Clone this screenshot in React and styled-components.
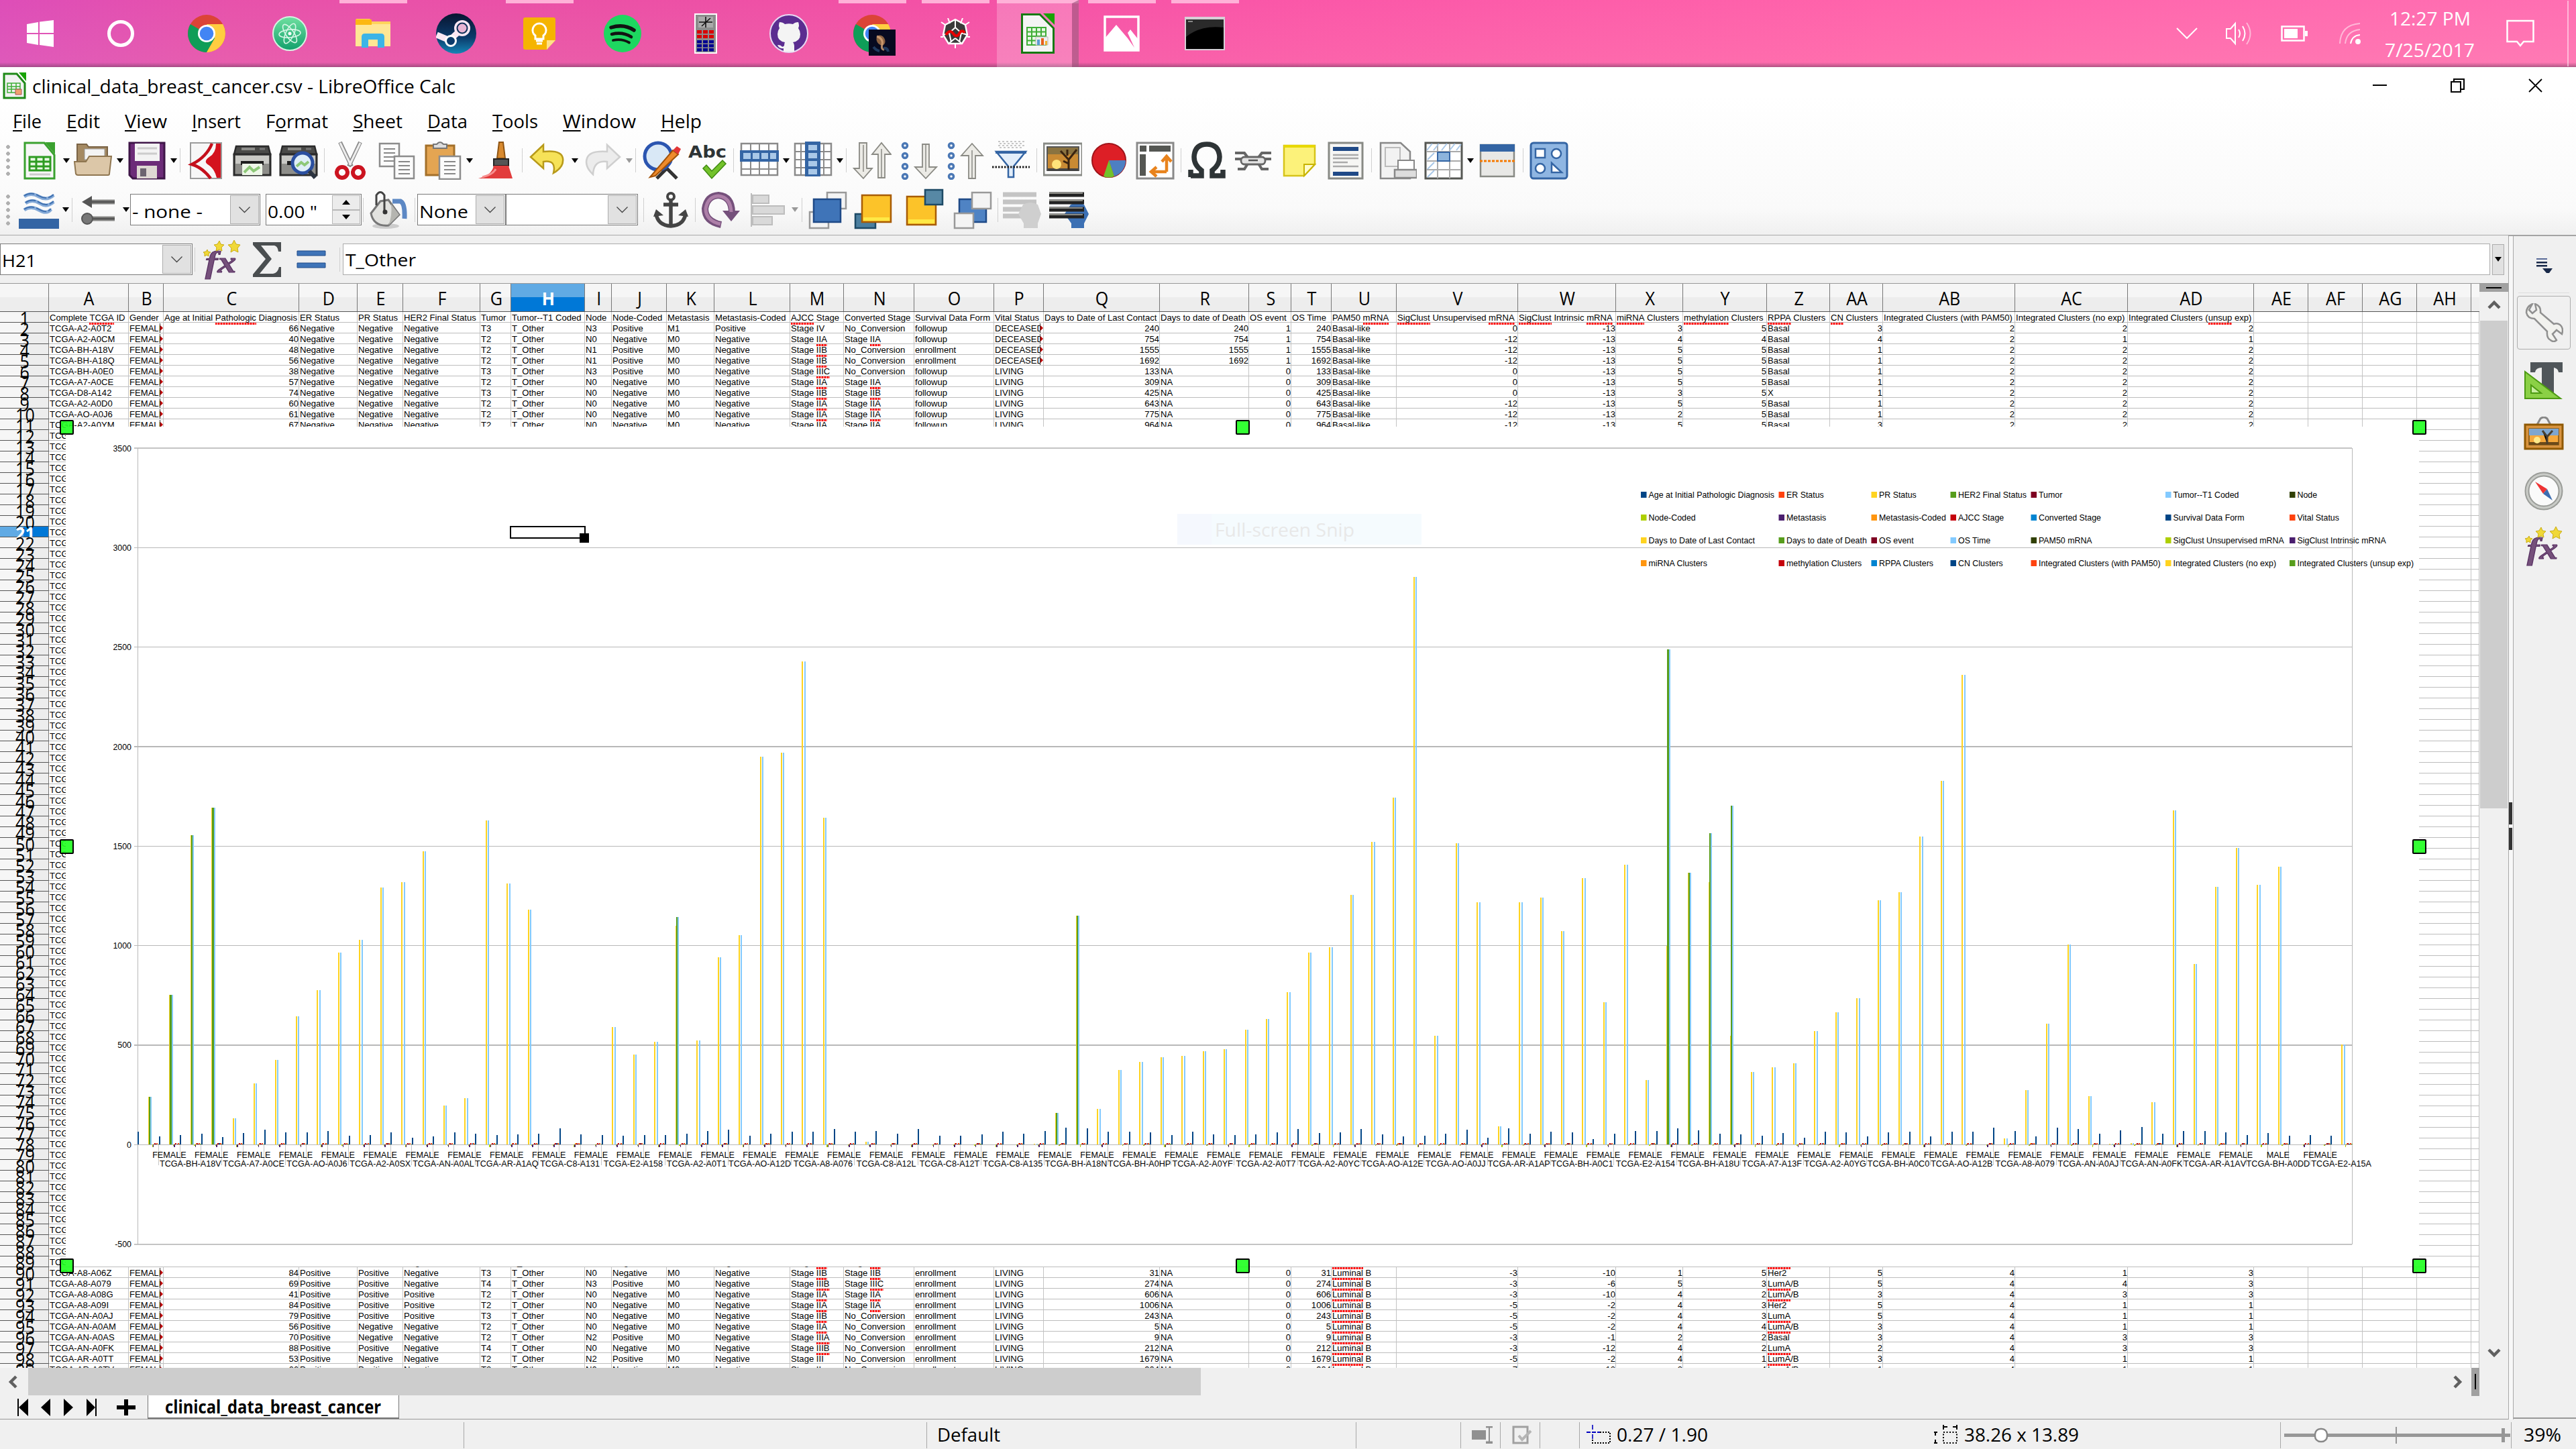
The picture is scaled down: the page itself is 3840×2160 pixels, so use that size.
import React, { useLayoutEffect, useRef, useState } from 'react';
import styled, { createGlobalStyle, css } from 'styled-components';

const UI = '"Open Sans", "Noto Sans", sans-serif';
const SHEET = '"Liberation Sans", Arial, sans-serif';

const Global = createGlobalStyle`
  html, body { margin: 0; padding: 0; background: #f0f0f0; }
  body { width: 3840px; height: 2160px; overflow: hidden; font-family: ${UI}; font-size: 27px; color: #000; }
  *, *::before, *::after { box-sizing: border-box; }
  svg { display: block; flex: none; }
`;

/* ---------- text that is condensed to a known width ---------- */
const FitBox = styled.span`
  display: inline-block; flex: none; width: ${p => p.$w}px; white-space: nowrap;
`;
const FitInner = styled.span`
  display: inline-block; transform-origin: 0 50%; white-space: pre;
`;
function Fit({ w, children }) {
  const ref = useRef(null);
  const [k, setK] = useState(1);
  useLayoutEffect(() => { setK(w / ref.current.getBoundingClientRect().width * k); }, [w]);
  return <FitBox $w={w}><FitInner ref={ref} style={{ transform: `scaleX(${k})` }}>{children}</FitInner></FitBox>;
}

/* ---------- taskbar ---------- */
const Screen = styled.div`
  width: 3840px; height: 2160px; display: flex; flex-direction: column; overflow: hidden; background: #f0f0f0;
`;
const Taskbar = styled.div`
  height: 100px; flex: none; display: flex; align-items: stretch; justify-content: space-between;
  background:
    linear-gradient(180deg, rgba(90,60,90,0) 93px, rgba(110,60,95,.55) 100px),
    linear-gradient(180deg, rgba(255,60,150,.12), rgba(255,150,170,.14)),
    linear-gradient(90deg, #d950bd 0, #e455ae 340px, #e853a8 900px, #f254a8 1400px, #fb5cab 2000px, #ff69ae 2800px, #ff76b6 3840px);
`;
const Apps = styled.div`display: flex; padding-left: 0;`;
const AppSlot = styled.div`
  width: ${p => p.$w || 124}px; height: 100px; display: flex; align-items: center; justify-content: center;
  border-top: 5px solid transparent; padding-bottom: 5px; padding-left: ${p => p.$pl || 0}px;
  background: ${p => (p.$open
    ? 'linear-gradient(#ffb1d8,#ffb1d8) 50% 0 / 101px 5px no-repeat border-box'
    : 'none')};
  ${p => p.$active && css`
    background: linear-gradient(#ffb1d8,#ffb1d8) 0 0 / 100% 5px no-repeat border-box, rgba(255,255,255,.22) border-box;
    border-right: 10px solid rgba(120,50,90,.45); width: 122px; margin-right: 2px; padding-left: 10px;
  `}
`;
const Tray = styled.div`display: flex; align-items: center; color: #fff;`;
const TrayIcon = styled.div`width: ${p => p.$w}px; display: flex; justify-content: center; padding-right: ${p => p.$pr || 0}px;`;
const Clock = styled.div`
  width: 150px; height: 100px; display: flex; flex-direction: column; align-items: center; font-size: 27px;
  line-height: 47px; padding-top: 4px; padding-right: 4px;
`;
const ShowDesktop = styled.div`width: 13px; height: 98px; border-left: 2px solid rgba(255,255,255,.5);`;

const Chrome = ({ badge }) => (
  <svg width={badge ? 64 : 58} height={badge ? 66 : 60} viewBox={badge ? '0 -3 64 66' : '0 0 58 60'}>
    <circle cx="29" cy="30" r="28" fill="#db4437" />
    <path d="M29 30 L4.8 16 A28 28 0 0 0 29 58 L42 36Z" fill="#0f9d58" />
    <path d="M29 16 H53.2 A28 28 0 0 1 29 58 L41 37Z" fill="#ffcd40" />
    <circle cx="29" cy="30" r="13" fill="#fff" /><circle cx="29" cy="30" r="10.3" fill="#4285f4" />
    {badge && (
      <g>
        <rect x="24" y="24" width="40" height="39" fill="#070a20" />
        <ellipse cx="42" cy="40" rx="8" ry="6" fill="#b9804e" opacity=".75" transform="rotate(60 42 40)" />
        <path d="M36 34q10 4 8 12t3 8" stroke="#d8a678" strokeWidth="3" fill="none" opacity=".8" />
        <path d="M46 52q6-1 7 5M31 50q4 5 9 6" stroke="#2a4f7a" strokeWidth="4" fill="none" opacity=".7" />
      </g>
    )}
  </svg>
);
const taskIcons = [
  [120, 0, <svg width="40" height="40" viewBox="0 0 40 40" fill="#fff"><path d="M0 6 17 3v16H0zM19 2.6 40 0v19H19zM0 21h17v16L0 34zM19 21h21v19l-21-3z" /></svg>],
  [120, 0, <svg width="42" height="42" viewBox="0 0 42 42"><circle cx="21" cy="21" r="17.5" fill="none" stroke="#fff" strokeWidth="5" /></svg>],
  [130, 0, <Chrome />, 6],
  [124, 0, <svg width="52" height="54" viewBox="0 0 52 54"><defs><linearGradient id="atm" x2="0" y2="1"><stop stopColor="#6fe0a0" /><stop offset="1" stopColor="#12a06c" /></linearGradient></defs><circle cx="26" cy="27" r="25" fill="url(#atm)" stroke="#d5f3e2" strokeWidth="2" /><g fill="none" stroke="#d9f7e8" strokeWidth="1.6"><ellipse cx="26" cy="27" rx="6" ry="16" transform="rotate(25 26 27)" /><ellipse cx="26" cy="27" rx="6" ry="16" transform="rotate(85 26 27)" /><ellipse cx="26" cy="27" rx="6" ry="16" transform="rotate(145 26 27)" /></g><circle cx="26" cy="27" r="2.5" fill="#fff" /></svg>],
  [124, 1, <svg width="54" height="46" viewBox="0 0 54 46"><path d="M1 3q0-2 2-2h18q3 0 4 4h28v37H1z" fill="#ffd35c" /><path d="M1 9h52v33H1z" fill="#ffe694" /><path d="M1 2h24v8H1z" fill="#fcb813" /><path d="M10 44V28q0-5 5-5h24q5 0 5 5v16H34V32H20v12z" fill="#3cb4e7" /></svg>],
  [124, 0, <svg width="60" height="60" viewBox="0 0 60 60"><defs><linearGradient id="stm" x2="0" y2="1"><stop stopColor="#08142f" /><stop offset=".6" stopColor="#0c3b6b" /><stop offset="1" stopColor="#1585b5" /></linearGradient></defs><circle cx="30" cy="30" r="30" fill="url(#stm)" /><path d="M1 32 20 40 33 28" stroke="#fbe7f3" strokeWidth="9" fill="none" strokeLinejoin="round" /><circle cx="22" cy="41" r="7.5" fill="#0c3b6b" stroke="#fff" strokeWidth="3" /><circle cx="39" cy="22" r="12" fill="#fbe7f3" /><circle cx="39" cy="22" r="8.500" fill="#0c2f57" /><circle cx="39" cy="22" r="6.500" fill="#e8b5d4" /></svg>],
  [124, 1, <svg width="48" height="48" viewBox="0 0 48 48"><path d="M0 3q0-3 3-3h42q3 0 3 3v31L35 48H3q-3 0-3-3z" fill="#f5b400" /><path d="M48 34 35 48V34z" fill="#ffe08a" /><path d="M24 9a10 10 0 0 0-6 18v5h12v-5a10 10 0 0 0-6-18zM19 35h10M20 39h8" fill="none" stroke="#fff" strokeWidth="3" /></svg>],
  [124, 0, <svg width="56" height="56" viewBox="0 0 56 56"><circle cx="28" cy="28" r="28" fill="#1ed760" /><g fill="none" stroke="#121212" strokeLinecap="round"><path d="M11 19q19-6 34 4" strokeWidth="5.5" /><path d="M12 29q16-4 29 4" strokeWidth="4.6" /><path d="M14 38q13-3 24 3.500" strokeWidth="3.8" /></g></svg>],
  [124, 0, <svg width="34" height="60" viewBox="0 0 34 60"><path d="M0 0h34v60H0z" fill="#fff" /><path d="M2 2h30v56H2z" fill="#8c8c8c" /><path d="M6 5h22v16H6z" fill="#aaa" /><path d="M7 13h20M17 5v16M11 19 24 7" stroke="#111" strokeWidth="1.6" />{[0, 1, 2].map(c => [24, 31].map(y => <rect key={`${c}${y}`} x={4 + c * 9} y={y + 1} width="7" height="5" fill="#d80000" />))}{[0, 1, 2].map(c => [40, 46, 52].map(y => <rect key={`${c}${y}`} x={4 + c * 9} y={y} width="7" height="4.500" fill="#000090" />))}</svg>],
  [124, 0, <svg width="58" height="58" viewBox="0 0 58 58"><circle cx="29" cy="29" r="28" fill="#5b2d90" stroke="#e6d9f2" strokeWidth="2" /><path d="M15 12q5 0 8 3 6-1.500 12 0 3-3 8-3 2 5 0 9 3 4 3 9 0 10-11 12 2 2 2 5v9H21v-5q-7 1-9-5 5 0 6 2 2 2 4-1 0-3 1-5-11-2-11-12 0-5 3-9-2-4 0-9z" fill="#f4f4f4" /></svg>],
  [124, 1, <Chrome badge />, 6],
  [124, 1, <svg width="46" height="46" viewBox="0 0 46 46"><path d="M23 2 38 10 41 25 33 38H13L5 25 8 10z" fill="#3a3a3a" stroke="#fff" strokeWidth="2.400" /><path d="M23 2v12l-9 8 3 14M23 14l9 8-3 14M23 30l-10 8M23 30l10 8M5 25l9-3M41 25l-9-3M23 38v7M2 6l6 4M44 6l-6 4M1 28h4M45 28h-4M12 0l3 8M34 0l-3 8" stroke="#fff" strokeWidth="2" fill="none" /><path d="M9 25q6-9 11-2t9 0 8-1" stroke="#e80000" strokeWidth="4" fill="none" /></svg>],
  [124, 2, <svg width="50" height="60" viewBox="0 0 50 60"><path d="M1.500 1.500H28L48.500 22v36.500h-47z" fill="#f4f4f4" stroke="#167a12" strokeWidth="3" /><path d="M33 0h17v17z" fill="#18a303" /><path d="M9 21h28v26H9z" fill="#e6f7e3" /><path d="M9 21h28v26H9zM9 27.500h28M9 34h28M9 40.500h28M16 21v26M23 21v26M30 21v26" stroke="#3fae37" strokeWidth="2" fill="none" /><path d="M22 35h18v12H22z" fill="#eee" stroke="#bbb" /><path d="M24 39h4v8h-4z" fill="#5b9bd5" /><path d="M30 37h4v10h-4z" fill="#e8601c" /><path d="M36 41h3v6h-3z" fill="#f0b030" /></svg>],
  [124, 1, <svg width="54" height="54" viewBox="0 0 54 54"><path d="M2 2h50v50H2z" fill="none" stroke="#fff" strokeWidth="3.500" /><path d="M2 34 19 14 36 34 46 48 36 26 40 21 52 36V52H2z" fill="#fff" /></svg>],
  [124, 1, <svg width="60" height="50" viewBox="0 0 60 50"><path d="M0 0h60v50H0z" fill="#d7cfd6" /><path d="M2 4h56v44H2z" fill="#000" /><path d="M2 4h56v12Q24 12 2 30z" fill="#2a2a2a" /><path d="M5 7h7" stroke="#888" strokeWidth="2" /></svg>],
];

/* ---------- window chrome ---------- */
const TopChrome = styled.div`
  height: 251px; flex: none; display: flex; flex-direction: column; border-bottom: 1.5px solid #a9a9a9;
  background: linear-gradient(180deg, #fff 0, #fff 40px, #fafafa 210px, #f0f0f0 250px);
`;
const TitleBar = styled.div`height: 58px; display: flex; align-items: center; justify-content: space-between; padding: 0 50px 2px 4px;`;
const TitleLeft = styled.div`display: flex; align-items: center; gap: 9px;`;
const WinButtons = styled.div`display: flex; align-items: center; gap: 95px; padding-bottom: 2px;`;
const MenuBar = styled.div`height: 45px; display: flex; align-items: center; gap: 37px; padding-left: 19px; font-size: 27px;`;
const Key = styled.span`text-decoration: underline; text-decoration-thickness: 2px; text-underline-offset: 3px;`;
const ToolBar = styled.div`height: ${p => p.$h}px; display: flex; align-items: center; padding-left: 9px;`;
const Grip = styled.div`
  width: 6px; height: 46px; margin-right: ${p => p.$mr || 9}px;
  background: radial-gradient(circle 3px at 3px 3px, #b0b0b0 90%, transparent) 0 0 / 6px 10px repeat-y;
`;
const Tool = styled.div`width: ${p => p.$w || 69}px; display: flex; justify-content: center; padding-right: ${p => p.$pr || 0}px;`;
const Arrow = styled.div`
  width: 11.3px; display: flex; justify-content: center;
  &::after { content: ''; border: 5.5px solid transparent; border-top: 7px solid ${p => (p.$off ? '#999' : '#000')}; border-bottom: 0; }
`;
const Sep = styled.div`width: 1px; height: ${p => p.$h || 36}px; background: #d0d0d0; margin: 0 ${p => p.$m ?? 3.45}px; flex: none;`;

const I = ({ children, s = 58, h }) => <svg width={s} height={h || s} viewBox={`0 0 ${s} ${h || s}`} fill="none">{children}</svg>;
const Lines = ({ x, y, w, n, g = 6, c = '#888' }) => <path d={Array.from({ length: n }, (_, i) => `M${x} ${y + i * g}h${w}`).join('')} stroke={c} strokeWidth="2" />;

const PrinterBody = () => (
  <g>
    <path d="M5 8h48l3 12H2z" fill="#4a4a48" stroke="#2b2b2b" strokeWidth="2.500" />
    <path d="M13 12h20" stroke="#8d8d8a" strokeWidth="4" /><path d="M40 12h8" stroke="#777" strokeWidth="3" />
    <path d="M2 20h54v31H2z" fill="#8e8e8a" stroke="#2b2b2b" strokeWidth="3" />
    <path d="M4 22h50v12H4z" fill="#c9c9c5" />
    <path d="M12 30h34v6H12z" fill="#1e1e1e" />
  </g>
);

const ic = {
  new: <I><path d="M7 3H36L51 21V56H7z" fill="#f7f7f7" stroke="#3aa12f" strokeWidth="3" /><path d="M37 2H52V20z" fill="#3aa12f" /><path d="M14 24h31v20H14z" fill="#e9f9e4" /><path d="M14 24h31v20H14zM14 31h31M14 38h31M24 24v20M35 24v20" stroke="#2e9c22" strokeWidth="3" /><path d="M14 50h31" stroke="#ccc" strokeWidth="3" /></I>,
  open: <I><path d="M5 5h14l3 4h28v40H5z" fill="#a58a63" stroke="#7a6345" strokeWidth="2" /><path d="M16 12h30v16H16z" fill="#f4f4f4" stroke="#999" /><path d="M1 31h17l5-8h33l-3 26q0 2-2 2H6q-2 0-3-2z" fill="#dcc7a8" stroke="#8f7650" strokeWidth="2" /></I>,
  save: <I><path d="M3 3h52v53H8l-5-5z" fill="#6c2c78" stroke="#3f1648" strokeWidth="3" /><path d="M11 4h37v26H11z" fill="#f3f3f3" /><path d="M15 11h29M15 19h29" stroke="#ccc" strokeWidth="3" /><path d="M14 37h30v19H14z" fill="#ded8d3" /><path d="M19 41h9v12h-9z" fill="#6c6470" /></I>,
  pdf: <I><path d="M6 3h46v53H6z" fill="#f7f7f7" stroke="#9b9b9b" strokeWidth="2" /><path d="M44 4h7v51h-6Q42 42 33 36 24 31 34 24 44 18 44 4z" fill="#d4121e" /><path d="M38 4Q30 24 8 35 24 40 36 56" stroke="#c4101c" strokeWidth="4.500" /></I>,
  print: <I><PrinterBody /><path d="M14 34h30v17H14z" fill="#eef7e8" /><path d="m17 47 8-8 6 6 9-6" stroke="#8dc878" strokeWidth="4" /></I>,
  preview: <I><PrinterBody /><circle cx="35" cy="33" r="15" fill="#dfeef8" stroke="#2a4fa0" strokeWidth="5" /><path d="m26 38 7-6 5 4 6-5" stroke="#8dc878" strokeWidth="4" /><path d="m45 45 9 10" stroke="#2b3340" strokeWidth="6" /></I>,
  cut: <I><path d="m14 2 17 36M44 2 27 38" stroke="#8b8b8b" strokeWidth="6" /><path d="m14 3 16 33M44 3 28 36" stroke="#eee" strokeWidth="3" /><circle cx="17" cy="47" r="8" stroke="#cc1420" strokeWidth="6" /><circle cx="41" cy="47" r="8" stroke="#cc1420" strokeWidth="6" /></I>,
  copy: <I><path d="M4 4h29v34H4z" fill="#fbfbfb" stroke="#8c8c8c" strokeWidth="2.500" /><Lines x={10} y={12} w={17} n={4} /><path d="M26 23h29v33H26z" fill="#fbfbfb" stroke="#8c8c8c" strokeWidth="2.500" /><Lines x={32} y={31} w={17} n={4} /></I>,
  paste: <I><path d="M4 7h42v44H4z" fill="#e4a552" stroke="#a3702a" strokeWidth="3" /><path d="M15 11h20V5h-5q-5-6-10 0h-5z" fill="#ddd" stroke="#777" strokeWidth="2" /><path d="M24 23h31v34H24z" fill="#fbfbfb" stroke="#8c8c8c" strokeWidth="2.500" /><Lines x={31} y={31} w={17} n={4} /></I>,
  brush: <I><path d="M33 2h6l3 24H30z" fill="#d88a2f" stroke="#8e5412" strokeWidth="2" /><path d="M25 27h22v10H25z" fill="#555" stroke="#222" strokeWidth="2" /><path d="M25 37h22l6 19H2Q22 52 25 37z" fill="#e23c3c" /><path d="M8 54q16-4 20-12" stroke="#f78f8f" strokeWidth="3" /></I>,
  undo: <I><path d="M22 6 3 24l19 17v-10q20-3 15 17 16-9 14-22T22 16z" fill="#f6e258" stroke="#b89a1a" strokeWidth="2.500" /></I>,
  redo: <I><path d="M36 6 55 24 36 41V31Q16 28 15 50 2 38 6 26t30-10z" fill="#ececec" stroke="#cfcfcf" strokeWidth="2.500" /></I>,
  find: <I><path d="m30 34 22 22M36 42 22 56" stroke="#333" strokeWidth="5" /><ellipse cx="24" cy="23" rx="20" ry="20" fill="#d9e8f6" stroke="#2b55b0" strokeWidth="5" /><path d="M12 54 46 14l8 6-34 32z" fill="#ee8b2c" stroke="#a25208" strokeWidth="2" /><path d="M46 14 52 8l6 4-4 8z" fill="#e23636" /></I>,
  row: <I><path d="M2 4h54v47H2z" fill="#fff" stroke="#8a8a8a" strokeWidth="2.500" /><path d="M2 42h54M16 4v47M29 4v47M43 4v47" stroke="#8a8a8a" strokeWidth="2" /><path d="M0 14h58v17H0z" fill="#3465a4" /><path d="M5 18h11v9H5zM19 18h10v9H19zM32 18h10v9H32zM45 18h9v9h-9z" fill="#a9c8e8" /></I>,
  col: <I><path d="M2 4h54v47H2z" fill="#fff" stroke="#8a8a8a" strokeWidth="2.500" /><path d="M2 16h54M2 28h54M2 40h54M11 4v47M45 4v47" stroke="#8a8a8a" strokeWidth="2" /><path d="M17 1h23v52H17z" fill="#3465a4" /><path d="M22 6h13v8H22zM22 18h13v8H22zM22 30h13v8H22zM22 42h13v8H22z" fill="#a9c8e8" /></I>,
  sort: <I><path d="M10 3v38H2l14 15 13-15h-8V3z" fill="#ecebe6" stroke="#8a8a84" strokeWidth="1.800" /><path d="M16 6v40M43 14v40" stroke="#8a8a84" strokeWidth="1.500" /><path d="M38 55V20H29L43 3l14 17h-9v35z" fill="#ecebe6" stroke="#8a8a84" strokeWidth="1.800" /><path d="M43 12v42" stroke="#8a8a84" strokeWidth="1.500" /></I>,
  desc: <I><path d="M35 5v34H24l16 17 16-17H45V5z" fill="#ecebe6" stroke="#8a8a84" strokeWidth="1.800" /><path d="M40 6v40" stroke="#8a8a84" strokeWidth="1.500" />{[7, 22, 38, 53].map(y => <circle key={y} cx="9" cy={y} r="3.500" stroke="#4b78b5" strokeWidth="3.500" />)}</I>,
  asc: <I><path d="M35 56V22H24L40 4l16 18H45v34z" fill="#ecebe6" stroke="#8a8a84" strokeWidth="1.800" /><path d="M40 14v42" stroke="#8a8a84" strokeWidth="1.500" />{[7, 22, 38, 53].map(y => <circle key={y} cx="9" cy={y} r="3.500" stroke="#4b78b5" strokeWidth="3.500" />)}</I>,
  filter: <I><path d="M10 1h40M12 4h36M10 7h40M12 10h36" stroke="#b5b5b5" strokeWidth="1.500" strokeDasharray="3 3" /><path d="M7 16h44L33 38v16h-8V38z" fill="#e3eefa" stroke="#3465a4" strokeWidth="2.500" /><path d="M6 17h46" stroke="#3465a4" strokeWidth="4" /><path d="M1 39h56" stroke="#222" strokeWidth="3" strokeDasharray="2.500 2" /></I>,
  image: <I><path d="M1 4h57v47H1z" fill="#fff" stroke="#888a85" strokeWidth="3" /><path d="M6 9h47v35H6z" fill="#c98b34" stroke="#555" strokeWidth="2" /><path d="M7 10h45v10H7z" fill="#8a7340" /><path d="M7 41h45v4H7z" fill="#444" /><circle cx="20" cy="35" r="7" fill="#ffe37a" /><path d="M38 43V28l-12-13M38 28l12-15M36 22v-9M38 34l-8-4" stroke="#3a2410" strokeWidth="3" /></I>,
  chart: <I><circle cx="29" cy="29" r="25" fill="#dd1f26" stroke="#a0141a" strokeWidth="2" /><path d="M29 29h25A25 25 0 0 1 37 53z" fill="#4d7fc2" /><path d="M29 29 37 53q-8 3-16 0z" fill="#73c22b" /></I>,
  pivot: <I><path d="M2 3h54v53H2z" fill="#fff" stroke="#8a8a8a" strokeWidth="3" /><path d="M6 7h10v9H6zM20 7h32v9H20zM6 20h9v32H6z" fill="#555753" /><path d="M46 46V26M39 31l7-8 7 8M46 46H25M31 39l-8 7 8 7" stroke="#e8831d" strokeWidth="4.500" /></I>,
  omega: <I><path d="M5 54V43M5 52h16V44Q10 36 10 24 11 5 29 5t19 19q0 12-11 20v8h16V43" stroke="#2e3436" strokeWidth="7.500" strokeLinejoin="miter" /></I>,
  link: <I><path d="M2 18h14l6 8M56 18H42l-6 8M2 27h10M46 27h10M6 42h10l5-8M52 42H42l-5-8" stroke="#666" strokeWidth="4" /><rect x="11" y="24" width="36" height="11" rx="5" fill="#e4e4e4" stroke="#666" strokeWidth="2.800" /><path d="M22 29h14" stroke="#555" strokeWidth="2.500" /></I>,
  note: <I><path d="M6 7h46v28L36 52H6z" fill="#fcf27a" stroke="#d6c41a" strokeWidth="2.500" /><path d="M52 35 36 52V35z" fill="#fffbc8" stroke="#c8b400" strokeWidth="2" /><path d="M6 8h46" stroke="#e8d800" strokeWidth="4" /></I>,
  header: <I><path d="M4 3h50v53H4z" fill="#f6f6f4" stroke="#888a85" strokeWidth="3" /><path d="M10 9h38v6H10zM10 46h38v6H10z" fill="#204a87" /><path d="M10 21h38M10 26h38M10 32h22M10 38h38" stroke="#aaa" strokeWidth="2.500" /></I>,
  printRange: <I><path d="M4 3h30l14 13v40H4z" fill="#f2f2f2" stroke="#888" strokeWidth="2.500" /><path d="M11 10h22v28H11z" stroke="#bbb" strokeWidth="2" /><path d="M30 29h24v14H30z" fill="#fff" stroke="#888" strokeWidth="2" /><path d="M25 43h33v12H25z" fill="#ddd" stroke="#888" strokeWidth="2.500" /></I>,
  freeze: <I><path d="M2 3h54v53H2z" fill="#fff" stroke="#555753" strokeWidth="3" /><path d="M3 16h52M3 30h52M3 43h52M20 4v52M38 4v52" stroke="#aaa" strokeWidth="2" /><path d="m4 14 8-10M14 14l8-10M26 14l8-10M38 14l8-10M48 14l7-9M5 28l10-10M5 42l10-10M5 54l10-10" stroke="#a9c8e8" strokeWidth="2" /><path d="M20 17h18v13H20z" fill="#8db4dc" stroke="#3465a4" strokeWidth="2" /></I>,
  split: <I><path d="M4 6h50v47H4z" fill="#e8e8e6" stroke="#888a85" strokeWidth="2.500" /><path d="M3 5h52v11H3z" fill="#3465a4" /><path d="M3 30h52" stroke="#f57900" strokeWidth="3" strokeDasharray="4 2" /></I>,
  draw: <I><rect x="2" y="3" width="54" height="53" rx="4" fill="#8fb6e2" stroke="#3465a4" strokeWidth="3" /><g fill="#fff" stroke="#3465a4" strokeWidth="2.500"><path d="M9 12h14v13H9z" /><circle cx="40" cy="19" r="7" /><circle cx="16" cy="41" r="7" /><path d="M33 33v14h15z" /></g></I>,
};

const AbcText = styled.text`font: 700 25px "DejaVu Sans Condensed", "DejaVu Sans", sans-serif; fill: #2e3436;`;
ic.abc = <I><AbcText x="0" y="25" textLength="57" lengthAdjust="spacingAndGlyphs">Abc</AbcText><path d="m22 41 5-5 8 9L51 29l5 5-21 22z" fill="#73c22b" stroke="#3f8a10" strokeWidth="1.500" /></I>;

/* '|' is a separator, a trailing 'v' marks a drop-down, 'x' a disabled one */
const bar1 = ['new v', 'open v', 'save v', '|', 'pdf', 'print', 'preview', '|', 'cut', 'copy', 'paste v', 'brush', '|', 'undo v', 'redo x', '|',
  'find', 'abc', '|', 'row v', 'col v', '|', 'sort', 'desc', 'asc', 'filter', '|', 'image', 'chart', 'pivot', '|', 'omega', 'link', 'note', 'header', '|',
  'printRange', 'freeze v', 'split', '|', 'draw'];

const Combo = styled.div`
  width: ${p => p.$w}px; height: 47px; flex: none; display: flex; align-items: stretch; justify-content: space-between;
  background: #fff; border: 1px solid #7a7a7a; padding: 1px 1px 1px 2px; margin-left: ${p => p.$ml || 0}px;
  line-height: ${p => p.$lh || 49}px; font-size: 26px; overflow: hidden;
`;
const ComboButton = styled.div`
  width: 43px; flex: none; background: #e1e1e1; border: 1px solid #adadad; display: flex; align-items: center; justify-content: center;
`;
const Chevron = () => <ComboButton><svg width="17" height="10" viewBox="0 0 17 10" fill="none"><path d="m.5.5 8 8 8-8" stroke="#444" strokeWidth="1.300" /></svg></ComboButton>;
const Spin = styled.div`width: 42px; display: flex; flex-direction: column;`;
const SpinButton = styled.div`
  flex: 1; background: #ececec; border: 1px solid #b8b8b8; display: flex; align-items: center; justify-content: center;
`;

const shape = {
  lineColor: <svg width="60" height="58" viewBox="0 0 60 58" fill="none"><path d="M8 9q10-7 22 0t22-2M10 19q10-7 21 0t21-2M8 29q10-7 22 0t18-1" stroke="#86abd8" strokeWidth="5" /><path d="M8 8q10-7 22 0t22-2M10 18q10-7 21 0t21-2M8 28q10-7 22 0t18-1" stroke="#3f70b0" strokeWidth="2" strokeDasharray="16 3" /><path d="M0 42h60v15H0z" fill="#3465a4" /></svg>,
  arrowStyle: <svg width="52" height="50" viewBox="0 0 52 50" fill="none"><path d="M50 13H14M14 38h36" stroke="#8a8a88" strokeWidth="7" /><path d="M50 13H14M14 38h36" stroke="#555" strokeWidth="3" /><path d="M1 13 16 4v18z" fill="#555" /><circle cx="9" cy="38" r="8" fill="#777" stroke="#555" strokeWidth="2" /></svg>,
  bucket: <svg width="58" height="58" viewBox="0 0 58 58" fill="none"><ellipse cx="26" cy="53" rx="20" ry="4" fill="#ccc" /><path d="M36 16h12q7 3 6 26" stroke="#5d88c4" strokeWidth="7" /><path d="M4 34 18 16 30 14 46 36 30 52Q8 54 4 34z" fill="#e2e2df" stroke="#777" strokeWidth="3" /><path d="M34 20 46 36 30 52q6-14 4-32z" fill="#b5b5b0" /><path d="M12 22V7q6-9 12 0v24" stroke="#444" strokeWidth="3" /><circle cx="25" cy="32" r="3.500" fill="#333" /></svg>,
  anchor: <svg width="52" height="56" viewBox="0 0 52 56" fill="none"><circle cx="26" cy="8" r="5" stroke="#444" strokeWidth="4" /><path d="M26 13v38M15 20h22M4 34q3 17 22 18 19-1 22-18" stroke="#444" strokeWidth="5.500" /><path d="M0 38 4 27l11 9zM52 38 48 27l-11 9z" fill="#444" /></svg>,
  rotate: <svg width="58" height="54" viewBox="0 0 58 54" fill="none"><path d="M30 49Q6 44 6 25 9 6 26 5q20 2 20 26" stroke="#75507b" strokeWidth="10" /><path d="M32 28h26L45 44z" fill="#75507b" /><path d="M29 48Q7 43 7 25 10 7 26 6q18 2 19 24" stroke="#ad7fa8" strokeWidth="5" /></svg>,
  align: <svg width="52" height="50" viewBox="0 0 52 50" fill="#d9d9d9" stroke="#bdbdbd" strokeWidth="2"><path d="M2 0v50" /><path d="M4 3h24v12H4zM4 19h47v12H4zM4 35h29v12H4z" /></svg>,
  front: <svg width="58" height="58" viewBox="0 0 58 58" strokeWidth="2.500"><path d="M28 3h28v24H28z" fill="#f4f4f4" stroke="#999" /><path d="M2 32h28v24H2z" fill="#f4f4f4" stroke="#999" /><path d="M8 13h40v34H8z" fill="#3f74b8" stroke="#1f4a87" /></svg>,
  forward: <svg width="58" height="58" viewBox="0 0 58 58" strokeWidth="2.500"><path d="M2 35h30v21H2z" fill="#4b7f9f" stroke="#1d4a66" /><path d="M12 7h43v40H12z" fill="#fcc329" stroke="#a85c05" /><path d="M14 40h39v5H14z" fill="#ffe845" /></svg>,
  backward: <svg width="58" height="66" viewBox="0 0 58 66" strokeWidth="2.500"><path d="M3 13h43v42H3z" fill="#fcc329" stroke="#a85c05" /><path d="M5 47h39v6H5z" fill="#ffe845" /><path d="M30 3h26v22H30z" fill="#5788a5" stroke="#1d4a66" /></svg>,
  back: <svg width="58" height="58" viewBox="0 0 58 58" strokeWidth="2.500"><path d="M9 13h40v34H9z" fill="#4f83c4" stroke="#1f4a87" /><path d="M28 3h28v24H28z" fill="#f4f4f4" stroke="#999" /><path d="M2 34h28v22H2z" fill="#f4f4f4" stroke="#999" /></svg>,
  textOff: <svg width="60" height="56" viewBox="0 0 60 56" fill="none"><path d="M0 5h50M0 16h50M0 27h50M0 37h50" stroke="#c4c4c4" strokeWidth="7" /><path d="M30 20q11-6 22 0l5 14-5 14v7H31v-7l-8-14z" fill="#cfcfcf" /></svg>,
  textOn: <svg width="60" height="56" viewBox="0 0 60 56" fill="none"><path d="M32 20q11-6 20 0l7 14-7 14v7H33v-7l-10-14z" fill="#3c70b4" /><path d="M0 5h52M0 16h52M0 27h52M0 37h52" stroke="#222" strokeWidth="7" /><path d="M0 3h50M0 14h50M0 25h50M0 35h50" stroke="#8a8a84" strokeWidth="2" /></svg>,
};

/* ---------- body ---------- */
const Body = styled.div`flex: 1; min-height: 0; display: flex; align-items: stretch;`;
const Main = styled.div`width: 3739px; flex: none; display: flex; flex-direction: column;`;
const FormulaBar = styled.div`
  height: 72px; flex: none; display: flex; align-items: center; border-bottom: 1.5px solid #999; background: #f0f0f0;
`;
const FormulaInput = styled.div`
  width: 3201px; height: 47px; background: #fff; border: 1px solid #ababab; margin-left: 2px; padding-left: 3px; line-height: 47px; font-size: 26px;
`;
const Expand = styled.div`
  width: 18px; height: 46px; margin-left: 3px; background: #e1e1e1; border: 1px solid #adadad; display: flex; align-items: center; justify-content: center;
`;
const SheetArea = styled.div`flex: 1; min-height: 0; display: flex;`;
const SheetCol = styled.div`width: 3696px; display: flex; flex-direction: column;`;
const HeadRow = styled.div`height: 42px; flex: none; display: flex; border-bottom: 1px solid #555; background: linear-gradient(#f6f6f6 20px, #ededed 20px);`;
const HeadCell = styled.div`
  width: ${p => p.$w}px; flex: none; border-right: 1px solid #777; text-align: center; line-height: 44px; font-size: 27px; padding-left: 2px;
  ${p => p.$on && css`background: linear-gradient(#60aae4 20px, #0078d7 20px); color: #fff; font-weight: 700;`}
`;
const Narrow = styled.span`display: inline-block; transform: scaleX(.93);`;
const Rows = styled.div`position: relative; flex: 1; overflow: hidden; background: #fff;`;
const Row = styled.div`height: 16px; display: flex;`;
const RowHead = styled.div`
  width: 73px; height: 16px; flex: none; border-right: 1px solid #777; border-bottom: 1px solid #555; text-align: center; padding-left: 2px;
  background: linear-gradient(90deg, #f6f6f6 35px, #ededed 35px); font-size: 27px; line-height: 19px;
  ${p => p.$on && css`background: linear-gradient(90deg, #60aae4 35px, #0078d7 35px); color: #fff; font-weight: 700;`}
`;
const Cell = styled.div`
  width: ${p => p.$w}px; flex: none; height: 16px; padding: 1px 0 0 1px; border-right: 1px solid #c4c4c4; border-bottom: 1px solid #bdbdbd;
  font: 13.1px/16px ${SHEET}; white-space: pre; overflow-x: clip; overflow-y: visible; position: relative;
  text-align: ${p => (p.$num ? 'right' : 'left')};
  ${p => p.$cut && css`
    &::after { content: ''; position: absolute; right: 0; top: 4px; border: 4px solid transparent; border-left: 4px solid #c00000; border-right: 0; }
    &::before { content: ''; position: absolute; right: 0; top: 1px; width: 5px; height: 14px; background: #fff; border-left: 1.5px solid #333; }
  `}
`;
const Misspelt = styled.span`
  position: relative;
  &::after {
    content: ''; position: absolute; left: 0; right: 0; bottom: -3px; height: 3px; z-index: 1;
    background: repeating-linear-gradient(90deg, #f00 0 2px, rgba(255,0,0,.5) 2px 4px);
  }
`;
const Filler = styled.div`flex: none; width: ${p => p.$w}px; border-bottom: 1px solid #bdbdbd; border-right: 1px solid #c4c4c4;`;

const names = ['A', 'B', 'C', 'D', 'E', 'F', 'G', 'H', 'I', 'J', 'K', 'L', 'M', 'N', 'O', 'P', 'Q', 'R', 'S', 'T', 'U', 'V', 'W', 'X', 'Y', 'Z', 'AA', 'AB', 'AC', 'AD', 'AE', 'AF', 'AG', 'AH'];
const widths = [119, 52, 202, 87, 68, 115, 46, 110, 40, 82, 71, 113, 80, 105, 119, 74, 173, 133, 63, 60, 97, 181, 146, 100, 125, 94, 79, 197, 168, 188, 81, 81, 81, 81];

const titles = 'Complete TCGA ID|Gender|Age at Initial Pathologic Diagnosis|ER Status|PR Status|HER2 Final Status|Tumor|Tumor--T1 Coded|Node|Node-Coded|Metastasis|Metastasis-Coded|AJCC Stage|Converted Stage|Survival Data Form|Vital Status|Days to Date of Last Contact|Days to date of Death|OS event|OS Time|PAM50 mRNA|SigClust Unsupervised mRNA|SigClust Intrinsic mRNA|miRNA Clusters|methylation Clusters|RPPA Clusters|CN Clusters|Integrated Clusters (with PAM50)|Integrated Clusters (no exp)|Integrated Clusters (unsup exp)'.split('|');

const N = 'Negative', P = 'Positive', NC = 'No_Conversion';
const line = (id, age, er, pr, her, t, n, m, mc, st, cs, form, days, dead, pam, su, si, mi, me, rp, cn, a, b, c) => [
  `TCGA-${id}`, 'FEMALE', age, er, pr, her, t, 'T_Other', n, n === 'N0' ? N : P, m, mc, `Stage ${st}`, cs === NC ? NC : `Stage ${cs}`, form,
  dead ? 'DECEASED' : 'LIVING', days, dead ? days : 'NA', dead ? 1 : 0, days, pam, su, si, mi, me, rp, cn, a, b, c];
const F = 'followup', E = 'enrollment', B = 'Basal-like', L = 'Luminal B';
const data = {
  2: line('A2-A0T2', 66, N, N, N, 'T3', 'N3', 'M1', P, 'IV', NC, F, 240, 1, B, 0, -13, 3, 5, 'Basal', 3, 2, 2, 2),
  3: line('A2-A0CM', 40, N, N, N, 'T2', 'N0', 'M0', N, 'IIA', 'IIA', F, 754, 1, B, -12, -13, 4, 4, 'Basal', 4, 2, 1, 1),
  4: line('BH-A18V', 48, N, N, N, 'T2', 'N1', 'M0', N, 'IIB', NC, E, 1555, 1, B, -12, -13, 5, 5, 'Basal', 1, 2, 2, 2),
  5: line('BH-A18Q', 56, N, N, N, 'T2', 'N1', 'M0', N, 'IIB', NC, E, 1692, 1, B, -12, -13, 5, 5, 'Basal', 1, 2, 2, 2),
  6: line('BH-A0E0', 38, N, N, N, 'T3', 'N3', 'M0', N, 'IIIC', NC, F, 133, 0, B, 0, -13, 5, 5, 'Basal', 1, 2, 2, 2),
  7: line('A7-A0CE', 57, N, N, N, 'T2', 'N0', 'M0', N, 'IIA', 'IIA', F, 309, 0, B, 0, -13, 5, 5, 'Basal', 1, 2, 2, 2),
  8: line('D8-A142', 74, N, N, N, 'T3', 'N0', 'M0', N, 'IIB', 'IIB', F, 425, 0, B, 0, -13, 3, 5, 'X', 1, 2, 2, 2),
  9: line('A2-A0D0', 60, N, N, N, 'T2', 'N0', 'M0', N, 'IIA', 'IIA', F, 643, 0, B, -12, -13, 5, 5, 'Basal', 1, 2, 2, 2),
  10: line('AO-A0J6', 61, N, N, N, 'T2', 'N0', 'M0', N, 'IIA', 'IIA', F, 775, 0, B, -12, -13, 2, 5, 'Basal', 1, 2, 2, 2),
  11: line('A2-A0YM', 67, N, N, N, 'T2', 'N0', 'M0', N, 'IIA', 'IIA', F, 964, 0, B, -12, -13, 5, 5, 'Basal', 3, 2, 2, 2),
  89: line('A8-A06X', 62, P, P, N, 'T2', 'N0', 'M0', N, 'IIB', 'IIB', E, 943, 0, L, -3, -10, 1, 5, 'LumA/B', 5, 4, 1, 3),
  90: line('A8-A06Z', 84, P, P, N, 'T3', 'N0', 'M0', N, 'IIB', 'IIB', E, 31, 0, L, -3, -10, 1, 5, 'Her2', 5, 4, 1, 3),
  91: line('A8-A079', 69, P, P, N, 'T4', 'N3', 'M0', N, 'IIIB', 'IIIC', E, 274, 0, L, -3, -6, 5, 3, 'LumA/B', 5, 4, 4, 3),
  92: line('A8-A08G', 41, P, P, P, 'T2', 'N0', 'M0', N, 'IIA', 'IIA', E, 606, 0, L, -3, -10, 4, 2, 'LumA/B', 3, 4, 3, 3),
  93: line('A8-A09I', 84, P, P, P, 'T2', 'N0', 'M0', N, 'IIA', 'IIA', E, 1006, 0, L, -5, -2, 4, 3, 'Her2', 5, 4, 1, 1),
  94: line('AN-A0AJ', 79, P, P, P, 'T3', 'N0', 'M0', N, 'IIB', NC, E, 243, 0, L, -5, -2, 4, 3, 'LumA', 5, 4, 1, 1),
  95: line('AN-A0AM', 56, P, N, N, 'T2', 'N0', 'M0', N, 'IIA', NC, E, 5, 0, L, -5, -2, 4, 4, 'LumA/B', 3, 4, 1, 1),
  96: line('AN-A0AS', 70, P, N, N, 'T2', 'N2', 'M0', N, 'IIIA', NC, E, 9, 0, L, -3, -1, 2, 2, 'Basal', 3, 4, 3, 3),
  97: line('AN-A0FK', 88, P, P, N, 'T4', 'N0', 'M0', N, 'IIIB', NC, E, 212, 0, L, -3, -12, 4, 2, 'LumA', 2, 4, 3, 3),
  98: line('AR-A0TT', 53, P, N, N, 'T2', 'N2', 'M0', N, 'III', NC, E, 1679, 0, L, -5, -2, 4, 1, 'LumA/B', 3, 4, 1, 1),
  99: line('AR-A0TV', 66, P, P, N, 'T2', 'N0', 'M0', N, 'II', NC, E, 904, 0, L, -7, -12, 3, 4, 'LumA/B', 1, 4, 1, 1),
};
const flagged = /^(TCGA|Pathologic|AJCC|mRNA|SigClust|miRNA|methylation|RPPA|CN|unsup|II[AB]|III[ABC]|Luminal|LumA)$/;
function Spelled({ text }) {
  if (/^TCGA-/.test(text)) return text;
  return text.split(/([ ()/])/).map((w, i) => (flagged.test(w) ? <Misspelt key={i}>{w}</Misspelt> : w));
}

function DataRow({ n, cells }) {
  const head = <RowHead $on={n === 21}><Narrow>{n}</Narrow></RowHead>;
  if (!cells) {
    return <Row>{head}<Cell $w={widths[0]}>TCGA</Cell><Filler $w={3684 - 73 - widths[0]} /><Filler $w={12} /></Row>;
  }
  return (
    <Row>
      {head}
      {widths.map((w, i) => {
        const v = cells[i];
        const cut = v === 'FEMALE' || v === 'DECEASED';
        return <Cell key={i} $w={w} $num={typeof v === 'number'} $cut={cut}>{v === undefined ? '' : typeof v === 'number' ? v : <Spelled text={v} />}</Cell>;
      })}
      <Filler $w={12} />
    </Row>
  );
}

/* ---------- chart ---------- */
const ChartLayer = styled.div`position: absolute; left: 98px; top: 171px; width: 3508px; height: 1252px; background: #fff; z-index: 2;`;
const Tag = styled.text`font-family: ${SHEET}; font-size: ${p => p.$s || 12.4}px; font-kerning: ${p => (p.$s ? 'none' : 'auto')}; fill: #000; text-anchor: ${p => p.$a || 'start'};`;
const palette = ['#004586', '#ff420e', '#ffd320', '#579d1c', '#7e0021', '#83caff', '#314004', '#aecf00', '#4b1f6f', '#ff950e', '#c5000b', '#0084d1'];
const legend = titles.slice(2);
const legendX = [2446, 2651.5, 2789.500, 2907.500, 3027.500, 3228, 3413];
const contact = [240, 754, 1555, 1692, 133, 309, 425, 643, 775, 964, 1028, 1291, 1320, 1473, 197, 232, 1630, 1311, 1181, 0, 0, 0, 592, 451, 515, 1100, 523, 943, 1053, 1949, 1969, 2429, 1643, 0, 15, 0, 0, 0, 0, 0, 0, 0, 5, 160, 1150, 180, 374,
  417, 440, 445, 469, 480, 577, 632, 766, 966, 991, 1256, 1520, 1744, 2853, 548, 1514, 1218, 91, 1218, 1243, 1072, 1340, 714, 1405, 325, 1000, 1367, 1318, 546, 364, 387, 410, 569, 666, 736, 1229, 1270, 1549, 1829, 2362, 0, 31, 274, 606, 1006, 243, 5, 9, 212, 1679, 906, 1297, 1492, 1307, 1396, 0, 0, 503];
const death = { 0: 240, 1: 754, 2: 1555, 3: 1692, 25: 1142, 43: 160, 44: 1150, 72: 2488, 73: 1367, 74: 1566, 75: 1702 };
const ages = [66, 40, 48, 56, 38, 57, 74, 60, 61, 67, 45, 48, 60, 36, 40, 62, 55, 48, 52, 55, 82, 52, 48, 43, 49, 49, 56, 67, 76, 43, 54, 64, 66, 79, 64, 67, 55, 77, 43, 45, 52, 64, 54, 67, 85, 80, 66, 65, 61, 48, 66, 52, 49, 50, 62, 79, 59, 60, 77, 52, 40, 46, 55, 76, 36, 80, 53, 65, 60, 29, 53, 67, 68, 82, 73, 54, 52, 43, 58, 36, 64, 63, 40, 63, 64, 40, 64, 66, 84, 69, 41, 84, 79, 56, 70, 88, 53, 67, 67, 60, 48, 58, 46, 48, 44];
const ids = 'BH-A18V A7-A0CE AO-A0J6 A2-A0SX AN-A0AL AR-A1AQ C8-A131 E2-A158 A2-A0T1 AO-A12D A8-A076 C8-A12L C8-A12T C8-A135 BH-A18N BH-A0HP A2-A0YF A2-A0T7 A2-A0YC AO-A12E AO-A0JJ AR-A1AP BH-A0C1 E2-A154 BH-A18U A7-A13F A2-A0YG BH-A0C0 AO-A12B A8-A079 AN-A0AJ AN-A0FK AR-A1AV BH-A0DD E2-A15A'.split(' ');
const X0 = 205.2, STEP = 31.435, Y0 = 1706.2, UNIT = 148.3 / 500;
const yOf = v => Y0 - v * UNIT;

function Bar({ i, s, v, w = 1.6 }) {
  if (!v) return null;
  const h = Math.abs(v) * UNIT;
  return <rect x={X0 + STEP * i + (STEP / 28) * s} y={v > 0 ? Y0 - h : Y0} width={w} height={h} fill={palette[s % 12]} />;
}

function Chart() {
  return (
    <ChartLayer>
      <svg width="3508" height="1252" viewBox="98 636 3508 1252">
        <g shapeRendering="crispEdges" stroke="#b8b8b8">
          {[3000, 2500, 2000, 1500, 1000, 500, 0].map(v => <path key={v} d={`M200 ${yOf(v)}H3506`} strokeWidth="1.300" />)}
          {[3500, -500].map(v => <path key={v} d={`M200 ${yOf(v)}H3506`} stroke="#c4c4c4" strokeWidth="2" />)}
          <path d="M205 668V1855M3506 668V1855" />
          {contact.map((_, i) => i > 0 && <path key={i} d={`M${X0 + STEP * i} 1707v30`} stroke="#c6c6c6" />)}
        </g>
        {[3500, 3000, 2500, 2000, 1500, 1000, 500, 0, -500].map(v => <Tag key={v} x="196" y={yOf(v) + 4.500} $a="end">{v}</Tag>)}
        <g shapeRendering="crispEdges">
          {contact.map((v, i) => {
            const d = death[i];
            const last = Math.max(v, d || 0);
            return (
              <g key={i}>
                <Bar i={i} s={0} v={ages[i]} w={2} />
                <Bar i={i} s={14} v={v} w={2} />
                <Bar i={i} s={15} v={d} w={2.2} />
                <Bar i={i} s={17} v={last} w={2} />
                <Bar i={i} s={19} v={i % 4 ? -5 : -12} />
                <Bar i={i} s={20} v={i < 42 || i % 3 === 0 ? -13 : -4} />
                <Bar i={i} s={21} v={4 + (i % 3)} w={2} />
                <Bar i={i} s={22} v={9} w={2} />
                <Bar i={i} s={24} v={3 + (i % 4)} w={2} />
                <Bar i={i} s={25} v={6} w={2} />
                <Bar i={i} s={27} v={4} w={2} />
              </g>
            );
          })}
        </g>
        {Array.from({ length: 52 }, (_, k) => {
          const c = 2 * k + 1;
          return <Tag key={k} x={X0 + STEP * (c + 0.5)} y="1726" $a="middle" $s={12.6}>{c === 101 ? 'MALE' : 'FEMALE'}</Tag>;
        })}
        {ids.map((id, k) => <Tag key={id} x={X0 + STEP * (3 * k + 2.5)} y="1739" $a="middle" $s={12.6}>{`TCGA-${id}`}</Tag>)}
        {legend.map((t, j) => {
          const x = legendX[j % 7], y = 741.500 + 34 * Math.floor(j / 7);
          return <g key={t}><rect x={x} y={y - 8.500} width="8.500" height="9" fill={palette[j % 12]} /><Tag x={x + 11.500} y={y}>{t}</Tag></g>;
        })}
      </svg>
    </ChartLayer>
  );
}

const Handle = styled.div`
  position: absolute; left: ${p => p.$x - 10}px; top: ${p => p.$y - 476}px; width: 21px; height: 22px; z-index: 4;
  background: rgba(30,255,30,.9); border: 2px solid #000; border-radius: 2px;
`;
const handles = [[99, 637], [1852, 637], [3606, 637], [99, 1262], [3606, 1262], [99, 1887], [1852, 1887], [3606, 1887]];
const Cursor = styled.div`
  position: absolute; left: 760px; top: 319px; width: 113px; height: 19px; border: 2px solid #000; z-index: 3;
  &::after { content: ''; position: absolute; right: -7px; bottom: -8px; width: 14px; height: 14px; background: #000; }
`;
const SnipTip = styled.div`
  position: absolute; left: 1755px; top: 301px; width: 364px; height: 46px; z-index: 3; padding-left: 56px;
  background: linear-gradient(90deg, #f5f8fe 51px, #f5fbfe 51px); color: #e8e8e8; line-height: 48px; font-size: 27px;
`;

/* ---------- scroll bars, tabs, status ---------- */
const VScroll = styled.div`width: 43px; flex: none; display: flex; flex-direction: column; align-items: center; background: #f0f0f0;`;
const SplitKnob = styled.div`
  width: ${p => (p.$v ? 12 : 43)}px; height: ${p => (p.$v ? 42 : 12)}px; background: #a0a0a0; display: flex; align-items: center; justify-content: center; flex: none;
  &::after { content: ''; background: #000; width: ${p => (p.$v ? 2 : 23)}px; height: ${p => (p.$v ? 23 : 2)}px; }
`;
const ScrollButton = styled.div`width: 43px; height: 43px; display: flex; align-items: center; justify-content: center; flex: none; padding-bottom: ${p => p.$pb || 0}px; padding-right: ${p => p.$pr || 0}px;`;
const VThumb = styled.div`width: 41px; height: 727px; background: #cdcdcd; flex: none;`;
const Grow = styled.div`flex: 1;`;
const Chev = ({ r }) => <svg width="20" height="20" viewBox="0 0 20 20" fill="none"><g transform={`rotate(${r} 10 10)`}><path d="m2 14 8-8 8 8" stroke="#606060" strokeWidth="4.500" /></g></svg>;
const HScroll = styled.div`height: 41px; flex: none; width: 3696px; display: flex; align-items: center; background: #f0f0f0;`;
const HThumb = styled.div`width: 1748px; height: 41px; background: #cdcdcd; margin-left: -1px;`;
const Tabs = styled.div`height: 36px; flex: none; display: flex; align-items: stretch; border-bottom: 1.5px solid #999;`;
const TabNav = styled.div`width: 220px; display: flex; align-items: center; padding-left: 22px;`;
const Tab = styled.div`
  width: 375px; background: #fff; border: 1px solid #777; border-top: 0; border-bottom-width: 2px; font-weight: 700; font-size: 26px; line-height: 35px; padding-left: 25px;
`;
const Side = styled.div`
  width: 101px; flex: none; display: flex; flex-direction: row; border-top: 1px solid #a0a0a0;
`;
const Splitter = styled.div`
  width: 8px; border-left: 1px solid #a8a8a8; border-right: 1px solid #a8a8a8; display: flex; flex-direction: column; align-items: flex-start; justify-content: flex-start;
  padding-top: 844px; gap: 5px; background: #f8f8f8;
`;
const SplitMark = styled.div`width: 5px; height: 33px; background: #333;`;
const Deck = styled.div`flex: 1; display: flex; flex-direction: column; align-items: center; border-bottom: 2px solid #999; margin-bottom: 1px; background: #f0f0f0; padding-right: 3px;`;
const DeckMenu = styled.div`height: 85px; width: 76px; border-bottom: 1px solid #ddd; display: flex; justify-content: center; align-items: flex-start; padding: 32px 0 0 2px; margin-bottom: 4px;`;
const DeckButton = styled.div`
  width: 80px; height: ${p => p.$h || 82}px; display: flex; align-items: center; justify-content: center;
  ${p => p.$on && css`border: 1px solid #adadad; border-radius: 4px; height: 80px; margin-bottom: 4px;`}
`;
const Status = styled.div`height: 44px; flex: none; display: flex; align-items: center; background: #f0f0f0; padding-top: 2px;`;
const Field = styled.div`
  width: ${p => p.$w}px; height: 39px; flex: none; display: flex; align-items: center; gap: ${p => p.$g || 0}px; padding-left: ${p => p.$pl || 0}px;
  border-right: ${p => (p.$last ? 0 : 1)}px solid #a8a8a8; font-size: 27px; line-height: 38px;
`;
const Gap = styled.div`width: ${p => p.$w}px; flex: none;`;

const FxText = styled.text`font: italic 700 46px "Liberation Serif", serif; fill: #75507b; stroke: #5c3566; stroke-width: 1.2px;`;
const Fx = () => (
  <svg width="58" height="60" viewBox="0 0 58 60">
    <FxText x="4" y="49" textLength="46" lengthAdjust="spacingAndGlyphs">fx</FxText>
    <path d="M47 1l3 6 6 1-4 5 1 6-6-3-5 3 1-6-5-5 6-1zM25 2l2 5 5 1-4 4 1 5-4-2-5 2 1-5-4-4 5-1zM7 15l1 3 4 1-3 2v4l-3-2-3 2v-4l-2-2 4-1z" fill="#f0d838" stroke="#c9ac14" />
  </svg>
);

const menus = [['', 'F', 'ile', 43], ['', 'E', 'dit', 50], ['', 'V', 'iew', 63], ['', 'I', 'nsert', 73], ['F', 'o', 'rmat', 93], ['', 'S', 'heet', 74], ['', 'D', 'ata', 60], ['', 'T', 'ools', 68], ['', 'W', 'indow', 109], ['', 'H', 'elp', 61]];

export default function App() {
  return (
    <Screen>
      <Global />
      <Taskbar>
        <Apps>
          {taskIcons.map(([w, state, icon, pl], i) => <AppSlot key={i} $w={w} $pl={pl} $open={state === 1} $active={state === 2}>{icon}</AppSlot>)}
        </Apps>
        <Tray>
          <TrayIcon $w={75} $pr={4}><svg width="32" height="18" viewBox="0 0 32 18" fill="none"><path d="m1 1 15 15L31 1" stroke="#fff" strokeWidth="2" /></svg></TrayIcon>
          <TrayIcon $w={82} $pr={2}><svg width="42" height="38" viewBox="0 0 42 38" fill="none" stroke="#fff" strokeWidth="2"><path d="M1 12h6l7-8v30l-7-8H1z" /><path d="M19 13q4 6 0 12M25 8q7 11 0 22" /><path d="M31 3q11 16 0 32" opacity=".5" /></svg></TrayIcon>
          <TrayIcon $w={80} $pr={2}><svg width="40" height="24" viewBox="0 0 40 24"><path d="M1.500 1.500h33v21h-33z" fill="none" stroke="#fff" strokeWidth="2.500" /><path d="M5 5h20v14H5zM36 8h4v8h-4z" fill="#fff" /></svg></TrayIcon>
          <TrayIcon $w={88} $pr={4}><svg width="32" height="32" viewBox="0 0 32 32" fill="none" stroke="#fff" strokeWidth="2"><g opacity=".5"><path d="M1 31Q2 3 31 1M9 31Q11 12 31 10" /></g><path d="M17 31q2-12 14-13" /><circle cx="28" cy="28" r="3" fill="#fff" /></svg></TrayIcon>
          <Clock><Fit w={121}>12:27 PM</Fit><Fit w={134}>7/25/2017</Fit></Clock>
          <TrayIcon $w={128} $pr={12}><svg width="42" height="42" viewBox="0 0 42 42" fill="none"><path d="M1.500 2h39v31H26l-5 6-5-6H1.500z" stroke="#fff" strokeWidth="2.500" /></svg></TrayIcon>
          <ShowDesktop />
        </Tray>
      </Taskbar>

      <TopChrome>
        <TitleBar>
          <TitleLeft>
            <svg width="35" height="40" viewBox="0 0 35 40" fill="none"><path d="M2 2h19l12 14v22H2z" fill="#f2f2f2" stroke="#1f8a18" strokeWidth="3" /><path d="M24 0h11v13z" fill="#18a303" /><path d="M7 16h19v14H7zM7 21h19M7 25h19M13 16v14M20 16v14" stroke="#3fae37" strokeWidth="1.500" /><path d="M19 25h9v8h-9z" fill="#f0a070" stroke="#a55" /></svg>
            <Fit w={631}>clinical_data_breast_cancer.csv - LibreOffice Calc</Fit>
          </TitleLeft>
          <WinButtons>
            <svg width="21" height="20" viewBox="0 0 21 20"><path d="M0 9h21v2H0z" /></svg>
            <svg width="21" height="21" viewBox="0 0 21 21" fill="none" stroke="#000" strokeWidth="2"><path d="M1 5h14v15H1z" /><path d="M5 5V1h15v15h-5" /></svg>
            <svg width="21" height="21" viewBox="0 0 21 21" stroke="#000" strokeWidth="1.800"><path d="M1 1l19 19M20 1 1 20" /></svg>
          </WinButtons>
        </TitleBar>
        <MenuBar>
          {menus.map(([a, k, b, w]) => <Fit key={k + b} w={w}>{a}<Key>{k}</Key>{b}</Fit>)}
        </MenuBar>
        <ToolBar $h={72}>
          <Grip />
          {bar1.map((t, i) => {
            if (t === '|') return <Sep key={i} />;
            const [name, drop] = t.split(' ');
            return <React.Fragment key={i}><Tool>{ic[name]}</Tool>{drop && <Arrow $off={drop === 'x'} />}</React.Fragment>;
          })}
        </ToolBar>
        <ToolBar $h={75}>
          <Grip $mr={9} />
          <Tool $w={68}>{shape.lineColor}</Tool><Arrow />
          <Sep $m={4} />
          <Tool $w={70}>{shape.arrowStyle}</Tool><Arrow />
          <Combo $w={194}><Fit w={105}>- none -</Fit><Chevron /></Combo>
          <Combo $w={143} $ml={8}>
            <Fit w={74}>0.00 "</Fit>
            <Spin>
              <SpinButton><svg width="12" height="7" viewBox="0 0 12 7"><path d="M0 7 6 0l6 7z" /></svg></SpinButton>
              <SpinButton><svg width="12" height="7" viewBox="0 0 12 7"><path d="M0 0l6 7 6-7z" /></svg></SpinButton>
            </Spin>
          </Combo>
          <Sep $m={2} />
          <Tool $w={71} $pr={3}>{shape.bucket}</Tool>
          <Sep $m={3} />
          <Combo $w={132}><Fit w={73}>None</Fit><Chevron /></Combo>
          <Combo $w={197}><span /><Chevron /></Combo>
          <Sep $m={8} />
          <Tool $w={64}>{shape.anchor}</Tool>
          <Sep $m={4} />
          <Tool $w={67}>{shape.rotate}</Tool>
          <Tool $w={72}>{shape.align}</Tool><Arrow $off />
          <Sep $m={4} />
          <Tool $w={68}>{shape.front}</Tool>
          <Tool $w={68}>{shape.forward}</Tool>
          <Tool $w={84}>{shape.backward}</Tool>
          <Tool $w={64} $pr={3}>{shape.back}</Tool>
          <Sep $m={3} />
          <Tool $w={71} $pr={3}>{shape.textOff}</Tool>
          <Tool $w={68} $pr={3}>{shape.textOn}</Tool>
        </ToolBar>
      </TopChrome>

      <Body>
        <Main>
          <FormulaBar>
            <Combo $w={287} $lh={47}><Fit w={51}>H21</Fit><Chevron /></Combo>
            <Sep $m={3} />
            <Tool $w={82} $pr={8}><Fx /></Tool>
            <Tool $w={48} $pr={4}><svg width="46" height="56" viewBox="0 0 46 56" fill="none"><path d="M2 2h42v14h-4q-1-8-6-9H14l16 20-18 22h20q7-1 9-10h3v15H2v-4l19-23L2 6z" fill="#4a4e50" /></svg></Tool>
            <Tool $w={80}><svg width="44" height="28" viewBox="0 0 44 28" fill="#3f74b8" stroke="#204a87"><path d="M1 1h42v7H1zM1 19h42v7H1z" /></svg></Tool>
            <Sep $m={2} />
            <FormulaInput><Fit w={105}>T_Other</Fit></FormulaInput>
            <Expand><svg width="10" height="7" viewBox="0 0 10 7"><path d="M0 0l5 7 5-7z" /></svg></Expand>
          </FormulaBar>
          <SheetArea>
            <SheetCol>
              <HeadRow>
                <HeadCell $w={73} />
                {names.map((n, i) => <HeadCell key={n} $w={widths[i]} $on={n === 'H'}><Narrow>{n}</Narrow></HeadCell>)}
              </HeadRow>
              <Rows>
                <DataRow n={1} cells={titles} />
                {Array.from({ length: 98 }, (_, k) => <DataRow key={k + 2} n={k + 2} cells={data[k + 2]} />)}
                <Chart />
                <SnipTip><Fit w={208}>Full-screen Snip</Fit></SnipTip>
                <Cursor />
                {handles.map(([x, y]) => <Handle key={`${x}-${y}`} $x={x} $y={y} />)}
              </Rows>
            </SheetCol>
            <VScroll>
              <SplitKnob />
              <ScrollButton $pb={3}><Chev r={0} /></ScrollButton>
              <VThumb />
              <Grow />
              <ScrollButton $pb={3}><Chev r={180} /></ScrollButton>
            </VScroll>
          </SheetArea>
          <HScroll>
            <ScrollButton $pr={3}><Chev r={-90} /></ScrollButton>
            <HThumb />
            <Grow />
            <ScrollButton><Chev r={90} /></ScrollButton>
            <SplitKnob $v />
          </HScroll>
          <Tabs>
            <TabNav>
              <svg width="182" height="28" viewBox="22 0 182 28">
                <path d="M26 1h2v26h-2zM42 1v26L28 14zM75 1v26L61 14zM95 1v26l14-13zM129 1v26l13-13zM142 1h2v26h-2z" />
                <path d="M174 14h28M188 2v24" stroke="#000" strokeWidth="6" />
              </svg>
            </TabNav>
            <Tab><Fit w={322}>clinical_data_breast_cancer</Fit></Tab>
          </Tabs>
        </Main>
        <Side>
          <Splitter><SplitMark /><SplitMark /></Splitter>
          <Deck>
            <DeckMenu><svg width="24" height="24" viewBox="0 0 24 24"><path d="M0 1h16v2H0z" fill="#5a6a98" /><path d="M0 6h16v2.500H0zM0 11h16v2.500H0zM9 16h15l-5 7h-4z" fill="#182848" /></svg></DeckMenu>
            <DeckButton $on><svg width="58" height="58" viewBox="0 0 58 58"><path d="M12 1Q3 5 3 14q2 9 12 9l19 19q-1 10 5 13 5 4 9 0l-6-9 6-6 8 6q3-9-3-14-4-3-9-1L24 14Q25 4 16 1l2 9-6 5-5-5z" fill="#f2f2ee" stroke="#909090" strokeWidth="2.500" /></svg></DeckButton>
            <DeckButton $h={84}><svg width="58" height="56" viewBox="0 0 58 56"><path d="M9 1h48v15h-6q-1-6-7-7v40H26V9q-9 0-10 7H9z" fill="#50565a" /><path d="M1 15 54 55H1z" fill="#8bd046" stroke="#4c9a12" strokeWidth="2" /><path d="M10 35 25 47H10z" fill="#c8eda0" stroke="#4c9a12" strokeWidth="2" /></svg></DeckButton>
            <DeckButton $h={74}><svg width="60" height="50" viewBox="0 0 60 50"><path d="m20 12 5-9q5-4 10 0l5 9" stroke="#888" strokeWidth="3" fill="none" /><path d="M2 12h56v36H2z" fill="#d99440" stroke="#8f5902" strokeWidth="3" /><path d="M8 18h44v24H8z" fill="#f5a83c" stroke="#7a5212" strokeWidth="1.500" /><path d="M8 18h44v10H8z" fill="#7ea6cf" /><path d="M8 38h44v4H8z" fill="#6b4a1a" /><circle cx="20" cy="35" r="5" fill="#ffe98a" /><path d="M35 41V30l-7-9M35 30l8-9" stroke="#4a4030" strokeWidth="3" /></svg></DeckButton>
            <DeckButton $h={98}><svg width="58" height="58" viewBox="0 0 58 58"><circle cx="29" cy="29" r="25" fill="#fafafa" stroke="#9a9c98" strokeWidth="7" /><circle cx="29" cy="29" r="25" fill="none" stroke="#c9cbc7" strokeWidth="3" /><path d="M16 15 34 26l-6 7z" fill="#e33" /><path d="M42 43 34 26l-6 7z" fill="#3c6db0" /></svg></DeckButton>
            <DeckButton $h={66}><Fx /></DeckButton>
          </Deck>
        </Side>
      </Body>

      <Status>
        <Field $w={692} />
        <Field $w={690} />
        <Field $w={640} $pl={15}><Fit w={94}>Default</Fit></Field>
        <Field $w={156} />
        <Field $w={59} $pl={16}><svg width="31" height="26" viewBox="0 0 31 26" fill="#909090"><path d="M0 6h21v14H0zM21 0h10v2.500h-4v20h4V26H21v-3.500h4v-20h-4z" /></svg></Field>
        <Field $w={59} $pl={17}><svg width="30" height="28" viewBox="0 0 30 28" fill="none"><path d="M2 2h21v24H2z" stroke="#a0a0a0" strokeWidth="3" /><path d="m10 15 5 6L28 8" stroke="#b5b5b5" strokeWidth="4" /></svg></Field>
        <Field $w={59} />
        <Field $w={1045} $pl={10} $g={9}>
          <svg width="36" height="30" viewBox="0 0 36 30" fill="none"><path d="M0 11h20" stroke="#0000c0" strokeWidth="2" strokeDasharray="6 2" /><path d="M9 0v22" stroke="#0000c0" strokeWidth="1.600" strokeDasharray="7 7" /><path d="M20 11h15v16H9V22" stroke="#000" strokeWidth="2" strokeDasharray="2 2" /></svg>
          <Fit w={136}>0.27 / 1.90</Fit>
          <Gap $w={319} />
          <svg width="36" height="30" viewBox="0 0 36 30" fill="none"><path d="M14 11h20v16H14z" stroke="#000" strokeWidth="2" strokeDasharray="2 2.500" /><path d="M14 0v7M34 0v7M15 3h5M33 3h-5M0 11h5M0 27h5M2 12v4M2 26v-4" stroke="#000" strokeWidth="2" /></svg>
          <Fit w={171}>38.26 x 13.89</Fit>
        </Field>
        <Field $w={344} $pl={5}>
          <svg width="337" height="30" viewBox="0 0 337 30"><path d="M0 13h337v5H0z" fill="#979797" /><path d="M166 3h2v25h-2zM324 5h5v21h-5z" fill="#979797" /><rect x="46" y="6" width="18" height="19" rx="8" fill="#fff" stroke="#888" strokeWidth="2.500" /></svg>
        </Field>
        <Field $w={96} $pl={18} $last><Fit w={56}>39%</Fit></Field>
      </Status>
    </Screen>
  );
}
